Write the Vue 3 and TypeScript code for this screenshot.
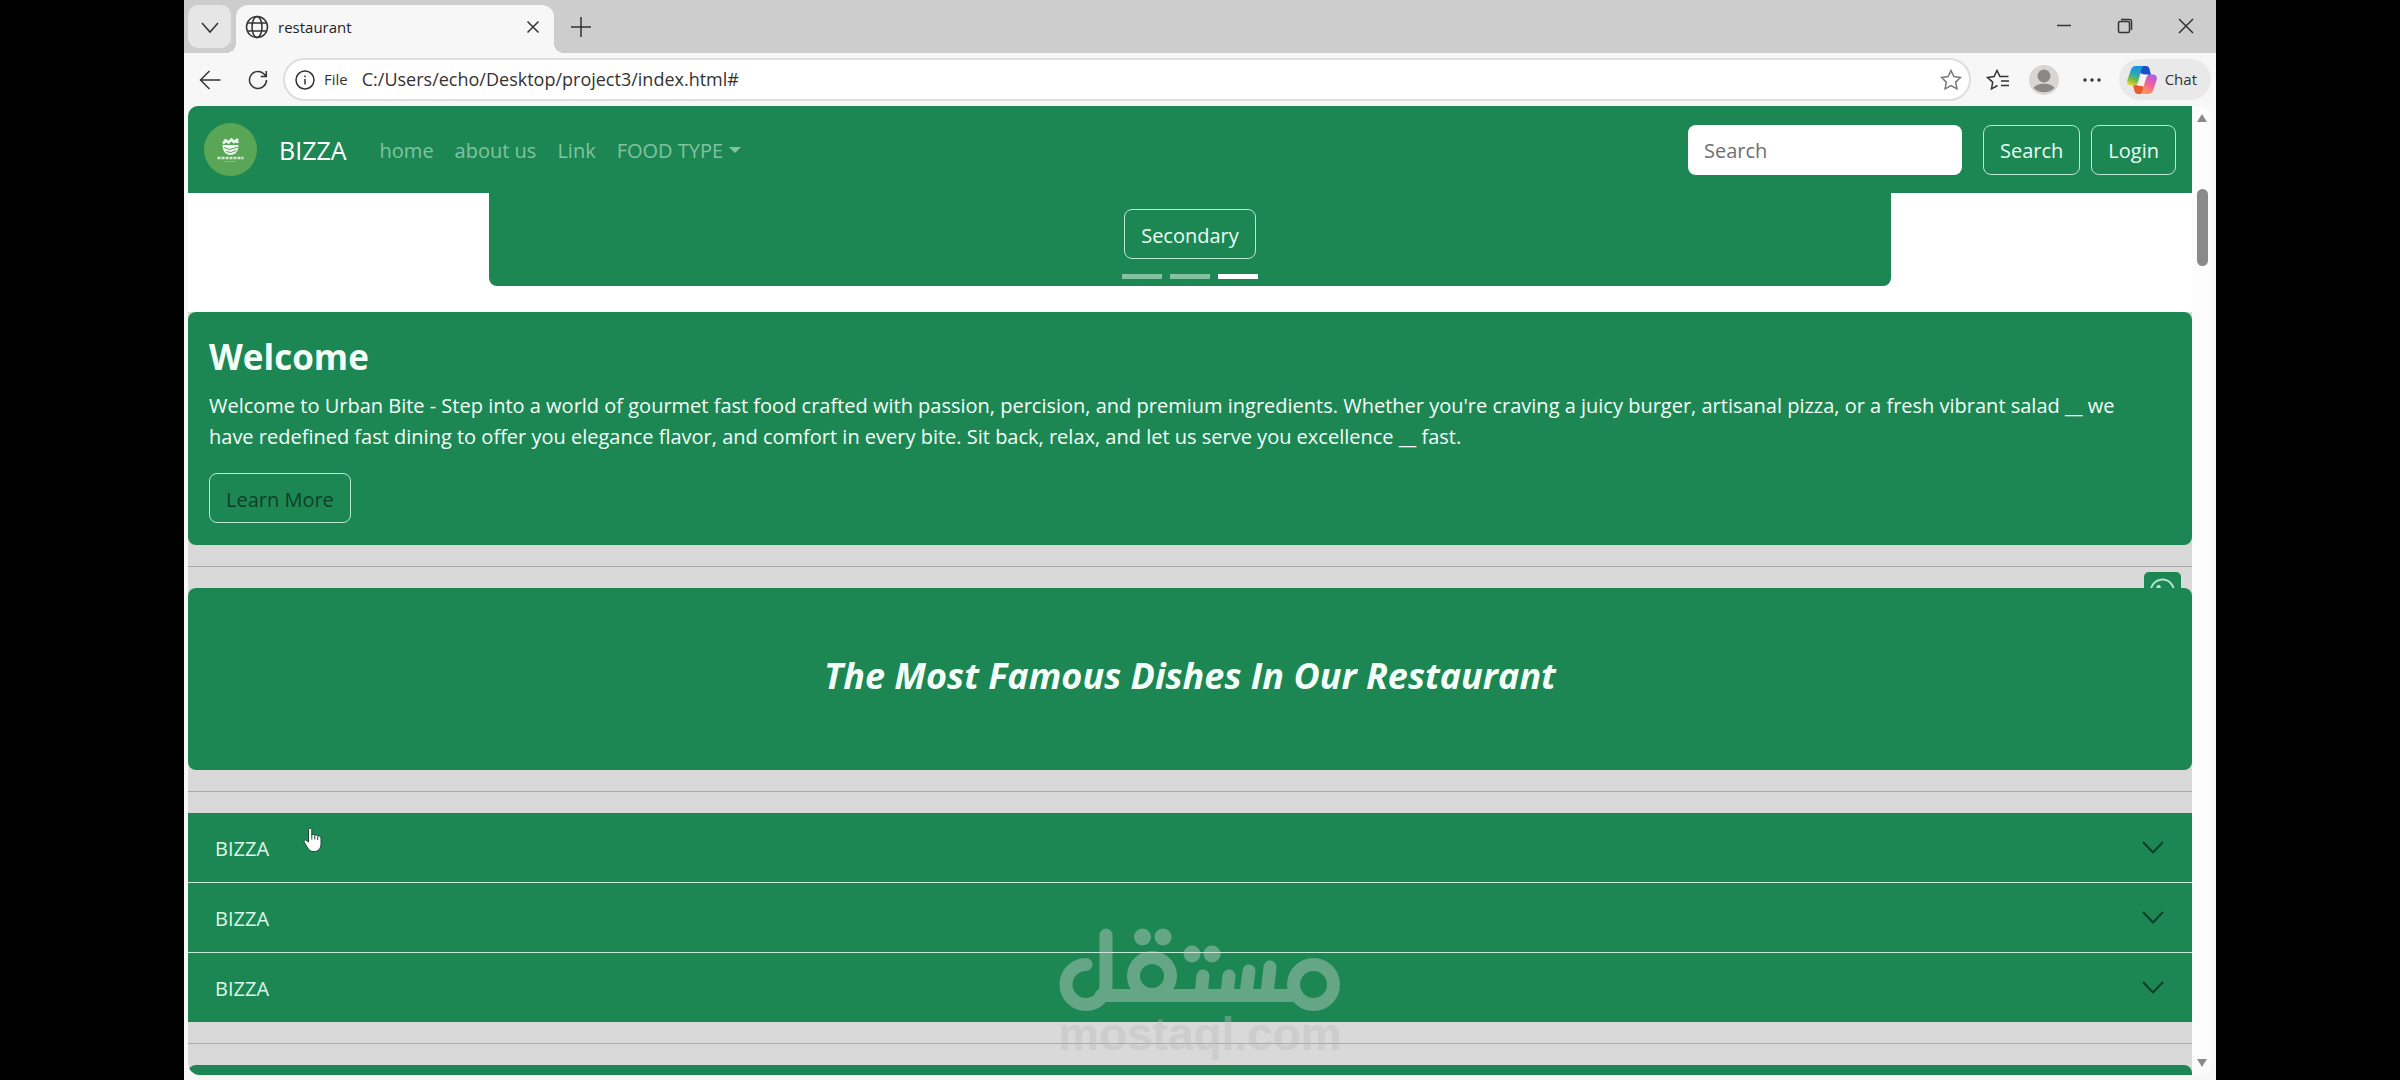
<script setup lang="ts">
import { ref } from 'vue'

const address = ref('C:/Users/echo/Desktop/project3/index.html#')
const query = ref('')
const navLinks: string[] = ['home', 'about us', 'Link']
const dishes: string[] = ['BIZZA', 'BIZZA', 'BIZZA']
const slides: number[] = [0, 1, 2]
const activeSlide = ref(2)
</script>

<template>
  <div class="desktop">
    <div class="browser">
      <header class="tabstrip">
        <button class="tab-list" aria-label="Tab actions">
          <svg width="20" height="20" viewBox="0 0 20 20"><path d="M2 6l8 9 8-9" /></svg>
        </button>
        <div class="tab">
          <svg class="globe" width="24" height="24" viewBox="0 0 24 24">
            <circle cx="12" cy="12" r="10.5" /><ellipse cx="12" cy="12" rx="5" ry="10.5" />
            <path d="M2.5 8h19M2.5 16h19" />
          </svg>
          <span class="tab-title">restaurant</span>
          <button class="plain" aria-label="Close tab">
            <svg width="14" height="14" viewBox="0 0 14 14"><path d="M1.5 1.5l11 11M12.5 1.5l-11 11" /></svg>
          </button>
        </div>
        <button class="plain new-tab" aria-label="New tab">
          <svg width="20" height="20" viewBox="0 0 20 20"><path d="M10 0v20M0 10h20" /></svg>
        </button>
        <div class="window-controls">
          <button class="plain" aria-label="Minimize">
            <svg width="16" height="16" viewBox="0 0 16 16"><path d="M1 7.500h14" /></svg>
          </button>
          <button class="plain" aria-label="Restore">
            <svg width="16" height="16" viewBox="0 0 16 16">
              <rect x="1.5" y="3.5" width="11" height="11" rx="1.5" /><path d="M4 1.5h8.500a2 2 0 0 1 2 2V12" />
            </svg>
          </button>
          <button class="plain" aria-label="Close">
            <svg width="16" height="16" viewBox="0 0 16 16"><path d="M1 1l14 14M15 1L1 15" /></svg>
          </button>
        </div>
      </header>

      <div class="toolbar">
        <button class="plain back" aria-label="Back">
          <svg width="22" height="20" viewBox="0 0 22 20"><path d="M21.500 10H1.500M10.500 1L1.500 10l9 9" /></svg>
        </button>
        <button class="plain reload" aria-label="Reload">
          <svg width="20" height="20" viewBox="0 0 20 20"><path d="M18.500 10a8.500 8.500 0 1 1-2.800-6.300L18 6M18.300 1v5.500h-5.600" /></svg>
        </button>
        <div class="address">
          <svg width="20" height="20" viewBox="0 0 20 20">
            <circle cx="10" cy="10" r="9" /><path d="M10 9v5.500M10 5.500v1.800" />
          </svg>
          <span class="scheme">File</span>
          <input v-model="address" class="url" type="text" aria-label="Address" />
          <button class="plain" aria-label="Favorite">
            <svg class="grey" width="22" height="22" viewBox="0 0 22 22">
              <path d="M11 1.500l2.900 6.100 6.600.9-4.800 4.600 1.200 6.700L11 16.600l-5.900 3.200 1.200-6.700L1.500 8.500l6.600-.9z" />
            </svg>
          </button>
        </div>
        <button class="plain favs" aria-label="Favorites">
          <svg width="24" height="22" viewBox="0 0 24 22">
            <path d="M11.500 16.500l-6 3.300 1.200-6.700L1.500 8.500l6.600-.9L11 1.500l3 6.100h8.500M15 12h8M15 16.500h8" />
          </svg>
        </button>
        <button class="plain profile" aria-label="Profile">
          <svg width="30" height="30" viewBox="0 0 30 30">
            <circle class="face" cx="15" cy="15" r="15" /><circle class="person" cx="15" cy="11" r="6.500" />
            <path class="person" d="M4.500 23a11.500 7 0 0 1 21 0 15 15 0 0 1-21 0z" />
          </svg>
        </button>
        <button class="plain more" aria-label="Settings and more">
          <svg class="solid" width="18" height="6" viewBox="0 0 18 6">
            <circle cx="2" cy="3" r="1.700" /><circle cx="9" cy="3" r="1.700" /><circle cx="16" cy="3" r="1.700" />
          </svg>
        </button>
        <button class="chat">
          <svg class="copilot" width="30" height="28" viewBox="0 0 30 28">
            <defs>
              <linearGradient id="cool" x1=".6" y1="0" x2=".3" y2="1">
                <stop offset="0" stop-color="#1c8fe0" /><stop offset=".35" stop-color="#24a3c8" />
                <stop offset=".7" stop-color="#6cba48" /><stop offset="1" stop-color="#f0d028" />
              </linearGradient>
              <linearGradient id="warm" x1=".8" y1="0" x2=".3" y2="1">
                <stop offset="0" stop-color="#b05ae8" /><stop offset=".5" stop-color="#f0609a" />
                <stop offset="1" stop-color="#ffa050" />
              </linearGradient>
            </defs>
            <path fill="#1b50c8" d="M13 0h6c2 0 3 1 3.500 3L24 9h-6l-5-2z" />
            <path fill="#ea5a30" d="M17 28h-6c-2 0-3-1-3.500-3L6 19h6l5 2z" />
            <path fill="url(#cool)" d="M8.500 0H17c-1.500 0-2 1.500-2.500 3L11 16c-.7 2-1.800 3.500-4 3.500H4c-3 0-4.500-2.500-3.600-5.500L4 3.500C4.800 1.200 6.200 0 8.500 0z" />
            <path fill="url(#warm)" d="M21.500 28H13c1.500 0 2-1.500 2.500-3L19 12c.7-2 1.800-3.500 4-3.500h3c3 0 4.500 2.500 3.600 5.500L26 24.500c-.8 2.300-2.200 3.500-4.500 3.500z" />
            <path fill="#f4f4f4" d="M17.500 8.500h4c-1.400.8-2 2-2.500 3.500l-2 6c-.5 1.200-1.600 1.700-3 1.700h-4c1.400-.9 2-2.200 2.500-3.700l2-5.700c.5-1.200 1.600-1.800 3-1.800z" />
          </svg>
          Chat
        </button>
      </div>

      <div class="viewport">
        <div class="page">
          <nav class="navbar">
            <svg class="logo" width="53" height="53" viewBox="0 0 53 53">
              <circle cx="26.500" cy="26.500" r="26.500" fill="#5aa657" />
              <path d="M18.500 22h16c0 6-3 10-8 10s-8-4-8-10z" fill="#eef8ee" />
              <path d="M19 20.500l3-3 2.500 2 3-3 2.500 2.500 4-3M20 18l2-1M32 19l2.500-.5" stroke="#eef8ee" stroke-width="2.500" fill="none" />
              <path d="M20 24.500l6 2 8-2.500M22 28.500l5 1 5-2" stroke="#5aa657" fill="none" />
              <path d="M13.500 35h26" stroke="#d3ead2" stroke-width="2.500" stroke-dasharray="3 1" />
              <path d="M21 38.500h11" stroke="#94c892" stroke-dasharray="2 1" />
            </svg>
            <a class="brand" href="#">BIZZA</a>
            <a v-for="link in navLinks" :key="link" class="nav-link" href="#">{{ link }}</a>
            <a class="nav-link dropdown" href="#">FOOD TYPE</a>
            <form class="search" @submit.prevent>
              <input v-model="query" type="search" placeholder="Search" aria-label="Search" />
              <button class="btn" type="submit">Search</button>
              <button class="btn" type="button">Login</button>
            </form>
          </nav>

          <section class="hero">
            <div class="carousel">
              <button class="btn">Secondary</button>
              <div class="indicators">
                <button
                  v-for="slide in slides"
                  :key="slide"
                  :class="{ active: slide === activeSlide }"
                  :aria-label="`Slide ${slide + 1}`"
                  @click="activeSlide = slide"
                ></button>
              </div>
            </div>
          </section>

          <section class="welcome">
            <h1>Welcome</h1>
            <p>
              Welcome to Urban Bite - Step into a world of gourmet fast food crafted with passion, percision, and
              premium ingredients. Whether you're craving a juicy burger, artisanal pizza, or a fresh vibrant salad __ we
              have redefined fast dining to offer you elegance flavor, and comfort in every bite. Sit back, relax, and
              let us serve you excellence __ fast.
            </p>
            <button class="btn dark">Learn More</button>
          </section>

          <div class="divider">
            <hr />
            <a class="whatsapp" href="#" aria-label="WhatsApp">
              <svg width="26" height="26" viewBox="0 0 26 26">
                <path d="M1.500 24.500l1.700-6A11.500 11.500 0 1 1 7.500 23z" />
                <path class="handset" d="M9 7c-2 1-2 3-1 5 2 4 5 6 8 7 2 0 3-1 3-3l-3-2-2 1-3-3 1-2-1-3z" />
              </svg>
            </a>
          </div>

          <section class="famous"><h2>The Most Famous Dishes In Our Restaurant</h2></section>
          <div class="divider"><hr /></div>

          <div class="accordion">
            <button v-for="(dish, i) in dishes" :key="i" class="accordion-item">
              {{ dish }}
              <svg width="22" height="13" viewBox="0 0 22 13"><path d="M1 1l10 10.500L21 1" /></svg>
            </button>
          </div>
          <div class="divider"><hr /></div>
          <section class="next"></section>
        </div>

        <div class="scrollbar">
          <svg width="10" height="8" viewBox="0 0 10 8"><path d="M5 0l5 8H0z" /></svg>
          <span class="thumb"></span>
          <svg class="down" width="10" height="8" viewBox="0 0 10 8"><path d="M0 0h10L5 8z" /></svg>
        </div>
      </div>
    </div>

    <svg class="pointer" width="20" height="26" viewBox="0 0 20 26">
      <path d="M5.500 2.500a1.700 1.700 0 0 1 3.300 0V8c1-.9 2.600-.7 3 .4 1-.7 2.500-.4 2.900.7 1.200-.6 3.300 0 3.300 2v6c0 4-2.500 7.500-7 7.500-3.500 0-5-1.500-6.500-4L1 15c-.6-1.500 1-2.500 2.200-1.700L5.500 15z" />
      <path class="creases" d="M8.800 7.500v5M11.800 8.500v4M14.700 9.500v3.500" />
    </svg>

    <div class="watermark">
      <svg width="282" height="84" viewBox="0 0 282 84">
        <g fill="none" stroke="#d9d9d9" stroke-width="13" stroke-linecap="round">
          <path d="M27 36.500a20 20 0 1 0 20 20V7M42 67.500h196" />
          <circle cx="93" cy="48" r="18.500" />
          <circle cx="254.500" cy="56.500" r="20" />
          <path d="M144 48l-2 18M170 48l-2 18M190 43l-3 23M211 39l-3 27" />
        </g>
        <g fill="#d9d9d9">
          <circle cx="83.500" cy="9" r="8.500" /><circle cx="104" cy="9" r="8.500" />
          <circle cx="133" cy="26" r="8.500" /><circle cx="153" cy="26" r="8.500" />
        </g>
      </svg>
      <span>mostaql.com</span>
    </div>
  </div>
</template>

<style>
body {
  margin: 0;
  background: #000;
}
</style>

<style scoped>
* {
  box-sizing: border-box;
}
.desktop {
  position: relative;
  min-height: 100vh;
  display: flex;
  padding: 0 184px;
  background: #000;
  font-family: 'Open Sans', 'Noto Sans', sans-serif;
  font-size: 20px;
  line-height: 31px;
}
button,
input {
  font: inherit;
}
button {
  cursor: pointer;
}
.browser {
  flex: 1;
  min-width: 0;
  display: flex;
  flex-direction: column;
  background: #f7f7f7;
}
.tabstrip svg,
.toolbar svg {
  display: block;
  fill: none;
  stroke: #333;
  stroke-width: 1.5;
}
.plain {
  padding: 0;
  border: 0;
  background: none;
}

.tabstrip {
  display: flex;
  align-items: center;
  height: 53px;
  padding-left: 4px;
  background: #cdcdcd;
}
.tab-list {
  display: grid;
  place-items: center;
  width: 43px;
  height: 43px;
  padding: 0;
  border: 0;
  border-radius: 10px;
  background: #e5e6e5;
}
.tab {
  position: relative;
  align-self: flex-end;
  display: flex;
  align-items: center;
  gap: 9px;
  width: 318px;
  height: 48px;
  margin-left: 5px;
  padding: 0 14px 4px 9px;
  border-radius: 12px 12px 0 0;
  background: #f7f7f7;
  font-size: 15px;
}
.tab::before,
.tab::after {
  content: '';
  position: absolute;
  bottom: 0;
  width: 10px;
  height: 10px;
}
.tab::before {
  right: 100%;
  background: radial-gradient(circle at 0 0, transparent 10px, #f7f7f7 10px);
}
.tab::after {
  left: 100%;
  background: radial-gradient(circle at 100% 0, transparent 10px, #f7f7f7 10px);
}
.tab-title {
  flex: 1;
  color: #1f1f1f;
}
.new-tab {
  margin-left: 17px;
}
.window-controls {
  display: flex;
  gap: 45px;
  margin-left: auto;
  padding: 0 22px 2px 0;
}

.toolbar {
  display: flex;
  align-items: center;
  height: 53px;
  padding: 0 5px 0 15px;
}
.reload {
  margin-left: 27px;
}
.address {
  flex: 1;
  display: flex;
  align-items: center;
  height: 43px;
  margin-left: 15px;
  padding: 0 7px 0 10px;
  border: 2px solid #dedede;
  border-radius: 22px;
  background: #fff;
}
.scheme {
  margin-left: 9px;
  color: #333;
  font-size: 15px;
}
.url {
  flex: 1;
  min-width: 0;
  height: 31px;
  margin-left: 14px;
  padding: 0;
  border: 0;
  outline: 0;
  background: none;
  color: #333;
  font-size: 18px;
}
.toolbar .grey {
  stroke: #777;
}
.favs {
  margin-left: 15px;
}
.profile {
  margin-left: 19px;
}
.toolbar .face {
  fill: #d8d5d2;
}
.toolbar .person {
  fill: #8b8987;
}
.more {
  margin: 0 18px 0 24px;
}
.toolbar .solid {
  fill: #333;
  stroke: none;
}
.chat {
  display: flex;
  align-items: center;
  gap: 8px;
  height: 41px;
  padding: 0 14px 0 8px;
  border: 0;
  border-radius: 21px;
  background: #e9e9e9;
  color: #333;
  font-size: 15px;
}
.toolbar .copilot,
.toolbar .profile svg {
  stroke: none;
}

.viewport {
  flex: 1;
  display: flex;
  margin: 0 4px 5px;
  border-radius: 10px 10px 12px 12px;
  overflow: hidden;
  background: #fcfcfc;
}
.page {
  flex: 1;
  min-width: 0;
  display: flex;
  flex-direction: column;
  background: #d8d9d8;
}
.navbar {
  display: flex;
  align-items: center;
  min-height: 87px;
  padding: 0 16px;
  background: #1d8754;
}
.logo {
  margin-right: 22px;
}
.navbar a {
  padding-top: 2px;
  text-decoration: none;
}
.brand {
  margin-right: 33px;
  color: #fff;
  font-size: 25px;
}
.nav-link {
  margin-right: 21px;
  color: #81c3a0;
}
.dropdown::after {
  content: '';
  display: inline-block;
  margin-left: 6px;
  vertical-align: 5px;
  border: 6px solid transparent;
  border-top-color: currentColor;
  border-bottom: 0;
}
.search {
  display: flex;
  gap: 11px;
  margin-left: auto;
}
.search input {
  width: 274px;
  height: 50px;
  margin-right: 10px;
  padding: 2px 16px 0;
  border: 0;
  border-radius: 8px;
  background: #fff;
  color: #212529;
}
.search input::placeholder {
  color: #6c6f72;
  opacity: 1;
}
.btn {
  height: 50px;
  padding: 2px 16px 0;
  border: 1px solid #b9e8d0;
  border-radius: 8px;
  background: none;
  color: #eafff3;
}
.dark {
  color: #0c3f27;
}
.hero {
  display: flex;
  justify-content: center;
  padding-bottom: 26px;
  background: #fff;
}
.carousel {
  display: flex;
  flex-direction: column;
  align-items: center;
  gap: 15px;
  width: 70%;
  padding: 16px 0 7px;
  border-radius: 0 0 8px 8px;
  background: #1d8754;
}
.indicators {
  display: flex;
  gap: 8px;
}
.indicators button {
  width: 40px;
  height: 5px;
  padding: 0;
  border: 0;
  background: #83c2a1;
}
.indicators .active {
  background: #fff;
}
.welcome,
.famous {
  position: relative;
  z-index: 1;
  border-radius: 8px;
  background: #1d8754;
  color: #f3fff8;
}
.welcome {
  padding: 21px 40px 22px 21px;
}
h1,
h2,
p {
  margin: 0;
}
h1 {
  margin-bottom: 9px;
  font-size: 35px;
  line-height: 48px;
}
.welcome p {
  margin-bottom: 21px;
}
.divider {
  position: relative;
  padding: 21px 0;
}
hr {
  height: 1px;
  margin: 0;
  border: 0;
  background: #a9aaa9;
}
.whatsapp {
  position: absolute;
  top: 27px;
  right: 11px;
  width: 37px;
  height: 40px;
  padding: 6px 5px;
  border-radius: 5px;
  background: #1d8754;
}
.whatsapp svg {
  display: block;
  fill: none;
  stroke: #b5e6cb;
  stroke-width: 2;
}
.whatsapp .handset {
  fill: #b5e6cb;
  stroke: none;
}
.famous {
  display: grid;
  place-items: center;
  min-height: 182px;
  padding-bottom: 6px;
}
h2 {
  font-size: 36px;
  font-style: italic;
  line-height: 48px;
}
.accordion {
  display: flex;
  flex-direction: column;
  gap: 1px;
  background: #c5ecd8;
}
.accordion-item {
  display: flex;
  align-items: center;
  justify-content: space-between;
  height: 69px;
  padding: 2px 28px 0 27px;
  border: 0;
  background: #1d8754;
  color: #dcf8e9;
}
.accordion-item svg {
  margin-bottom: 2px;
  fill: none;
  stroke: #0c3f27;
  stroke-width: 2;
}
.next {
  flex: 1;
  min-height: 9px;
  border-radius: 8px 8px 0 0;
  background: #1d8754;
}
.scrollbar {
  display: flex;
  flex-direction: column;
  align-items: center;
  width: 20px;
  padding: 8px 0;
}
.scrollbar svg {
  fill: #8a8a8a;
}
.thumb {
  width: 11px;
  height: 77px;
  margin-top: 67px;
  border-radius: 6px;
  background: #8a8a8a;
}
.down {
  margin-top: auto;
}
.pointer {
  position: absolute;
  top: 827px;
  left: 303px;
  z-index: 2;
  fill: #fff;
  stroke: #1b4a33;
  stroke-width: 1;
}
.watermark {
  position: absolute;
  top: 928px;
  left: 1058px;
  z-index: 2;
  display: flex;
  flex-direction: column;
  align-items: center;
  opacity: 0.38;
  pointer-events: none;
  color: #bcbcbc;
  font: bold 46px/44px 'Liberation Sans', sans-serif;
}
</style>
